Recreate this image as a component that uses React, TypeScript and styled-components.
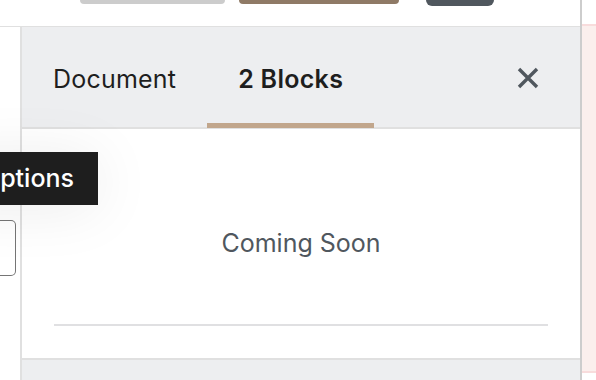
import React from "react";
import styled, { createGlobalStyle } from "styled-components";

const GlobalStyle = createGlobalStyle`
  html, body {
    margin: 0;
    padding: 0;
    background: #fff;
  }
  body {
    font-family: Inter, "Noto Sans", sans-serif;
    overflow: hidden;
  }
`;

const Screen = styled.div`
  position: relative;
  width: 596px;
  height: 380px;
  display: flex;
  overflow: hidden;
  background: #fff;
`;

const Main = styled.div`
  width: 580px;
  display: flex;
  flex-direction: column;
  border-right: 2px solid #cdcdcd;
`;

const TopBar = styled.div`
  height: 26px;
  display: flex;
  align-items: flex-start;
  padding-left: 80px;
  border-bottom: 1px solid #e0e0e0;
  flex-shrink: 0;
`;

const TopButton = styled.div<{ $w: number; $bg: string; $h: number; $gap: number }>`
  width: ${(p) => p.$w}px;
  height: ${(p) => p.$h}px;
  margin-right: ${(p) => p.$gap}px;
  background: ${(p) => p.$bg};
  border-radius: 0 0 6px 6px;
`;

const Body = styled.div`
  flex: 1;
  display: flex;
  min-height: 0;
`;

const Gutter = styled.div`
  width: 20px;
  flex-shrink: 0;
  padding-top: 193px;
`;

const GhostButton = styled.div`
  width: 15px;
  height: 54px;
  border: 1px solid #757575;
  border-left: none;
  border-radius: 0 5px 5px 0;
`;

const Panel = styled.div`
  flex: 1;
  display: flex;
  flex-direction: column;
  border-left: 2px solid #e0e0e0;
`;

const PanelHeader = styled.div`
  height: 100px;
  background: #edeef0;
  border-bottom: 2px solid #e0e0e0;
  display: flex;
  align-items: stretch;
  flex-shrink: 0;
`;

const Tab = styled.div<{ $active?: boolean }>`
  position: relative;
  display: flex;
  align-items: center;
  padding: 3px 31px 0;
  font-size: 25px;
  letter-spacing: ${(p) => (p.$active ? "0.3px" : "0.2px")};
  font-weight: ${(p) => (p.$active ? 600 : 400)};
  color: #1e1e1e;
  &::after {
    content: "";
    position: absolute;
    left: 0;
    right: 0;
    bottom: -1px;
    height: 5px;
    background: ${(p) => (p.$active ? "#c1a68c" : "transparent")};
  }
`;

const CloseButton = styled.div`
  margin-left: auto;
  width: 96px;
  display: flex;
  align-items: center;
  justify-content: center;
  padding-right: 4px;
  padding-top: 2px;
`;

const PanelContent = styled.div`
  height: 229px;
  padding: 0 32px;
  display: flex;
  flex-direction: column;
  flex-shrink: 0;
`;

const Placeholder = styled.div`
  height: 195px;
  display: flex;
  align-items: center;
  justify-content: center;
  font-size: 25px;
  color: #50575e;
  padding-top: 33px;
  box-sizing: border-box;
`;

const Divider = styled.div`
  height: 2px;
  background: #e0e0e2;
`;

const PanelFooter = styled.div`
  flex: 1;
  background: #edeef0;
  border-top: 2px solid #e0e0e0;
`;

const Strip = styled.div`
  flex: 1;
  display: flex;
  flex-direction: column;
  padding-top: 24px;
`;

const PinkArea = styled.div`
  height: 345px;
  background: #fbefed;
  border-top: 2px solid #f8dcdc;
  border-bottom: 2px solid #f8dcdc;
`;

const Tooltip = styled.div`
  position: absolute;
  right: 498px;
  top: 152px;
  height: 51px;
  display: flex;
  align-items: center;
  padding: 0 24px 2px 40px;
  background: #1e1e1e;
  color: #fff;
  font-size: 25px;
  font-weight: 500;
  white-space: nowrap;
  box-shadow: 0 4px 60px rgba(0, 0, 0, 0.08);
`;

const CloseIcon = () => (
  <svg width="24" height="24" viewBox="0 0 24 24">
    <path
      d="M3 3 L21 21 M21 3 L3 21"
      stroke="#50575e"
      strokeWidth="3.4"
      strokeLinecap="butt"
    />
  </svg>
);

export default function App() {
  return (
    <>
      <GlobalStyle />
      <Screen>
        <Main>
          <TopBar>
            <TopButton $w={145} $h={4} $bg="#cccccc" $gap={14} />
            <TopButton $w={160} $h={4} $bg="#8f7a66" $gap={27} />
            <TopButton $w={68} $h={6} $bg="#50575e" $gap={0} />
          </TopBar>
          <Body>
            <Gutter>
              <GhostButton />
            </Gutter>
            <Panel>
              <PanelHeader>
                <Tab>Document</Tab>
                <Tab $active>2 Blocks</Tab>
                <CloseButton>
                  <CloseIcon />
                </CloseButton>
              </PanelHeader>
              <PanelContent>
                <Placeholder>Coming Soon</Placeholder>
                <Divider />
              </PanelContent>
              <PanelFooter />
            </Panel>
          </Body>
        </Main>
        <Strip>
          <PinkArea />
        </Strip>
        <Tooltip>Options</Tooltip>
      </Screen>
    </>
  );
}
